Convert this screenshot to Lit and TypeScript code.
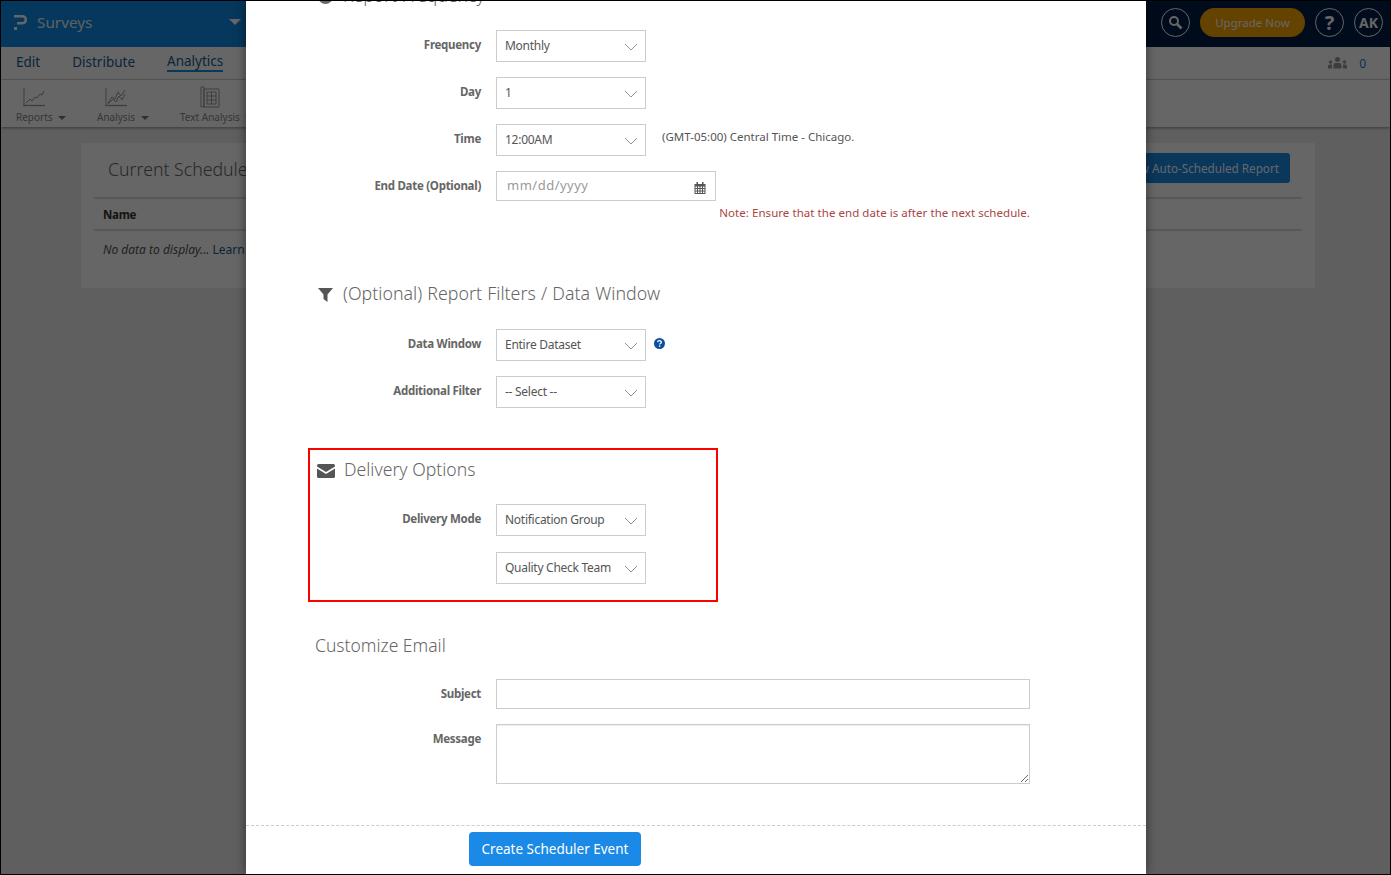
import { html, css, LitElement, svg } from 'lit';
import { customElement } from 'lit/decorators.js';

const chevron = html`<svg class="arrow" width="14" height="8" viewBox="0 0 14 8" fill="none">
  <path d="M1 1L7 7L13 1" stroke="#8b95a3" stroke-width="1"/>
</svg>`;

const chartLine = svg`<path d="M1 0V18" stroke="currentColor" stroke-width="1"/><path d="M0 17.500H22" stroke="currentColor" stroke-width="1.300"/><path d="M3 15L7 11L9 13L12 9L14 10L17 6L19 7L21 3" fill="none" stroke="currentColor" stroke-width="1"/>`;
const chartDouble = svg`<path d="M1 0V18" stroke="currentColor" stroke-width="1"/><path d="M0 17.500H22" stroke="currentColor" stroke-width="1.300"/><path d="M3 15L7 9L10 11L13 4L16 8L20 2" fill="none" stroke="currentColor" stroke-width="1"/><path d="M3 16L8 11L11 14L14 8L17 12L20 6" fill="none" stroke="currentColor" stroke-width="1"/>`;
const bookIcon = svg`<path d="M1 1H4V21H1ZM4 3H19V21H4Z" fill="none" stroke="currentColor" stroke-width="1"/><path d="M7 6H16V18H7ZM7 10H16M7 14H16M11.500 6V18" fill="none" stroke="currentColor" stroke-width="1"/>`;

@customElement('form-select')
class FormSelect extends LitElement {
  static properties = { value: { type: String } };
  value = '';

  static styles = css`
    :host {
      display: block;
      position: relative;
      width: 150px;
      height: 32px;
    }
    select {
      appearance: none;
      -webkit-appearance: none;
      width: 100%;
      height: 100%;
      padding: 0 24px 1px 8px;
      box-sizing: border-box;
      border: 1px solid #ccc;
      border-radius: 0;
      background: #fff;
      color: #555;
      font: 12px 'Noto Sans', sans-serif;
      letter-spacing: -0.27px;
      outline: none;
    }
    .arrow {
      position: absolute;
      top: 13px;
      right: 8px;
      pointer-events: none;
    }
  `;

  render() {
    return html`<select><option>${this.value}</option></select>${chevron}`;
  }
}

@customElement('app-root')
export class AppRoot extends LitElement {
  static styles = css`
    :host {
      display: block;
      font-family: 'Noto Sans', sans-serif;
      color: #666;
    }
    * {
      box-sizing: border-box;
    }
    .shell {
      position: relative;
      height: 875px;
      border: 1px solid #000;
      overflow: hidden;
      background: #eee;
    }

    /* page behind the dialog */
    .topbar {
      display: flex;
      align-items: center;
      height: 46px;
      padding-bottom: 3px;
      background: linear-gradient(90deg, #0f89e6 0%, #0f89e6 20%, #001c48 78%, #001c48 100%);
      color: #fff;
    }
    .logo {
      display: flex;
      align-items: center;
      gap: 10px;
      width: 240px;
      margin-bottom: 1px;
      padding-left: 13px;
      font-size: 15.300px;
      color: #eaf3fa;
    }
    .caret-big {
      width: 0;
      height: 0;
      margin-left: auto;
      border: 6px solid transparent;
      border-top-color: #fff;
      border-bottom: 0;
    }
    .top-actions {
      display: flex;
      align-items: center;
      gap: 10px;
      margin-left: auto;
      padding-right: 7px;
    }
    .round {
      display: flex;
      align-items: center;
      justify-content: center;
      width: 29px;
      height: 29px;
      border: 1px solid #fff;
      border-radius: 50%;
      font-weight: 700;
      font-size: 14px;
    }
    .round.big {
      font-size: 20px;
    }
    .upgrade {
      display: flex;
      align-items: center;
      justify-content: center;
      width: 105px;
      height: 29px;
      border-radius: 15px;
      background: #f9a800;
      color: #fff;
      font-size: 11.500px;
    }
    .nav {
      display: flex;
      align-items: center;
      gap: 32px;
      height: 33px;
      padding: 0 15px 2px;
      background: #fff;
      border-bottom: 1px solid #ddd;
      font-size: 13.500px;
      color: #1a5a94;
    }
    .nav .current {
      border-bottom: 2px solid #1a8fd8;
      line-height: 17px;
    }
    .members {
      display: flex;
      align-items: center;
      gap: 11px;
      margin: 2px 0 0 auto;
      padding-right: 9px;
      font-size: 12px;
      color: #1a7ad0;
    }
    .tools {
      display: flex;
      height: 47px;
      padding-left: 15px;
      background: #fff;
      box-shadow: 0 1px 3px rgba(0, 0, 0, 0.4);
    }
    .tool {
      width: 81px;
      font-size: 10px;
      line-height: 14px;
      color: #888;
    }
    .tool:nth-child(2) {
      width: 83px;
    }
    .tool-icon {
      display: flex;
      align-items: center;
      height: 24px;
      margin: 5px 0 1px;
      padding-left: 7px;
      color: #999;
    }
    .tool:nth-child(2) .tool-icon {
      padding-left: 8px;
    }
    .tool:nth-child(3) .tool-icon {
      padding-left: 20px;
    }
    .caret {
      display: inline-block;
      width: 0;
      height: 0;
      margin-left: 3px;
      vertical-align: middle;
      border: 4px solid transparent;
      border-top-color: #777;
      border-bottom: 0;
    }
    .card {
      margin: 16px 75px 0 80px;
      height: 145px;
      padding: 0 13px;
      background: #fff;
    }
    .card-head {
      display: flex;
      align-items: center;
      justify-content: space-between;
      height: 54px;
      padding: 0 12px 2px 14px;
      font-size: 17.700px;
      font-weight: 300;
      color: #666;
    }
    .new-report {
      height: 30px;
      margin: 0 0 2px;
      padding: 0 11px;
      border: 0;
      border-radius: 3px;
      background: #1a8ae6;
      color: #fff;
      font: 11.700px 'Noto Sans', sans-serif;
    }
    .table-head {
      padding: 8px 9px 7px;
      border-top: 2px solid #ddd;
      border-bottom: 2px solid #ddd;
      font-size: 11.500px;
      font-weight: 700;
      letter-spacing: -0.3px;
      color: #333;
    }
    .table-empty {
      padding: 10px 9px;
      font-size: 12px;
      font-style: italic;
      color: #555;
    }
    .table-empty span {
      font-style: normal;
      color: #1a5a94;
    }

    .overlay {
      position: absolute;
      inset: 0;
      background: rgba(0, 0, 0, 0.6);
    }

    /* dialog */
    .modal {
      position: absolute;
      top: 0;
      bottom: 0;
      left: 245px;
      width: 900px;
      overflow: hidden;
      background: #fff;
      box-shadow: 0 0 10px rgba(0, 0, 0, 0.5);
    }
    .body {
      margin-top: -18px;
    }
    .heading {
      display: flex;
      align-items: center;
      gap: 10px;
      height: 24px;
      margin: 0 0 23px 72px;
      font-size: 17.600px;
      font-weight: 300;
      color: #666;
    }
    .heading svg {
      margin-top: 3px;
    }
    .row {
      display: grid;
      grid-template-columns: 235px auto;
      column-gap: 15px;
      justify-content: start;
      margin-bottom: 15px;
    }
    .label {
      padding-top: 7px;
      text-align: right;
      font-size: 11.500px;
      font-weight: 700;
      letter-spacing: -0.280px;
      color: #666;
    }
    .with-side {
      display: flex;
      align-items: center;
    }
    .zone {
      margin: -7px 0 0 16px;
      font-size: 11.500px;
      color: #555;
    }
    .help {
      margin: -3px 0 0 8px;
    }
    .date {
      position: relative;
      width: 220px;
    }
    .date input,
    .subject,
    .message {
      display: block;
      border: 1px solid #ccc;
      outline: none;
      background: #fff;
    }
    .date input {
      width: 100%;
      height: 30px;
      padding: 0 10px 2px;
      font: 13px 'Noto Sans', sans-serif;
      letter-spacing: 0.5px;
    }
    .date input::placeholder {
      color: #999;
    }
    .date svg {
      position: absolute;
      top: 11px;
      right: 10px;
    }
    .note {
      width: 534px;
      margin: -11px 0 0 250px;
      height: 76px;
      text-align: right;
      font-size: 11.500px;
      letter-spacing: 0.050px;
      color: #a94442;
    }
    .filters {
      margin-bottom: 40px;
    }
    .filters .heading {
      margin-bottom: 24px;
      font-size: 17.800px;
      word-spacing: 0.6px;
    }
    .filters .row:last-child {
      margin-bottom: 0;
    }
    .delivery {
      width: 410px;
      margin-left: 62px;
      padding: 7px 0 16px;
      border: 2px solid #f00;
    }
    .delivery .heading {
      gap: 9px;
      margin: 0 0 23px 7px;
    }
    .delivery .row {
      grid-template-columns: 171px auto;
      margin-bottom: 16px;
    }
    .delivery .row:last-child {
      margin-bottom: 0;
    }
    .email-title {
      height: 24px;
      margin: 31px 0 22px 69px;
      font-size: 17.500px;
      font-weight: 300;
      color: #666;
    }
    .subject {
      width: 534px;
      height: 30px;
    }
    .message {
      width: 534px;
      height: 60px;
      resize: vertical;
      box-shadow: inset 0 1px 1px rgba(0, 0, 0, 0.075);
    }
    .row.last {
      margin-bottom: 41px;
    }
    .footer {
      padding: 6px 0 0 223px;
      border-top: 1px dashed #ccc;
    }
    .create {
      width: 172px;
      height: 34px;
      padding-bottom: 2px;
      border: 0;
      border-radius: 4px;
      background: #1a8ae6;
      color: #fff;
      font: 13.500px 'Noto Sans', sans-serif;
    }
  `;

  render() {
    return html`
      <div class="shell">
        <div class="topbar">
          <div class="logo">
            <svg width="13" height="15" viewBox="0 0 13 15" fill="none">
              <path d="M0 1.200H8Q11.800 1.200 11.800 4.700T8 8.200H3" stroke="#fff" stroke-width="2.400"/>
              <rect x="0" y="12" width="3" height="3" fill="#fff"/>
            </svg>
            Surveys
            <span class="caret-big"></span>
          </div>
          <div class="top-actions">
            <div class="round">
              <svg width="15" height="15" viewBox="0 0 15 15" fill="none">
                <circle cx="6" cy="6" r="4" stroke="#fff" stroke-width="2"/>
                <path d="M9 9L13.500 13.500" stroke="#fff" stroke-width="2.600"/>
              </svg>
            </div>
            <div class="upgrade">Upgrade Now</div>
            <div class="round big">?</div>
            <div class="round">AK</div>
          </div>
        </div>

        <div class="nav">
          <span>Edit</span>
          <span>Distribute</span>
          <span class="current">Analytics</span>
          <div class="members">
            <svg width="21" height="12" viewBox="0 0 21 12" fill="#999">
              <circle cx="10.500" cy="2.500" r="2.500"/>
              <path d="M6.500 11.500V8Q6.500 6 8.500 6H12.500Q14.500 6 14.500 8V11.500Z"/>
              <circle cx="3.500" cy="5" r="1.700"/>
              <path d="M1 11.500V9Q1 7.500 2.500 7.500H5V11.500Z"/>
              <circle cx="17.500" cy="5" r="1.700"/>
              <path d="M16 7.500H18.500Q20 7.500 20 9V11.500H16Z"/>
            </svg>
            0
          </div>
        </div>

        <div class="tools">
          <div class="tool">
            <div class="tool-icon"><svg width="22" height="19" viewBox="0 0 22 19">${chartLine}</svg></div>
            <span>Reports <i class="caret"></i></span>
          </div>
          <div class="tool">
            <div class="tool-icon"><svg width="22" height="19" viewBox="0 0 22 19">${chartDouble}</svg></div>
            <span>Analysis <i class="caret"></i></span>
          </div>
          <div class="tool">
            <div class="tool-icon"><svg width="20" height="22" viewBox="0 0 20 22">${bookIcon}</svg></div>
            <span>Text Analysis <i class="caret"></i></span>
          </div>
        </div>

        <div class="card">
          <div class="card-head">
            <span>Current Schedules</span>
            <button class="new-report">+ Create New Auto-Scheduled Report</button>
          </div>
          <div class="table-head">Name</div>
          <div class="table-empty">No data to display... <span>Learn more</span></div>
        </div>

        <div class="overlay"></div>

        <div class="modal">
          <div class="body">
            <div class="heading">
              <svg width="15" height="15" viewBox="0 0 15 15"><circle cx="7.500" cy="7.500" r="7.500" fill="#666"/></svg>
              Report Frequency
            </div>

            <div class="row">
              <div class="label">Frequency</div>
              <form-select value="Monthly"></form-select>
            </div>
            <div class="row">
              <div class="label">Day</div>
              <form-select value="1"></form-select>
            </div>
            <div class="row">
              <div class="label">Time</div>
              <div class="with-side">
                <form-select value="12:00AM"></form-select>
                <span class="zone">(GMT-05:00) Central Time - Chicago.</span>
              </div>
            </div>
            <div class="row">
              <div class="label">End Date (Optional)</div>
              <div class="date">
                <input placeholder="mm/dd/yyyy" />
                <svg width="12" height="12" viewBox="0 0 12 12" fill="#555">
                  <path d="M2.500 0H4V2H8V0H9.500V2H11.500V12H.5V2H2.500ZM1.500 4.500V6H3V4.500ZM4 4.500V6H5.500V4.500ZM6.500 4.500V6H8V4.500ZM9 4.500V6H10.500V4.500ZM1.500 7V8.500H3V7ZM4 7V8.500H5.500V7ZM6.500 7V8.500H8V7ZM9 7V8.500H10.500V7ZM1.500 9.500V11H3V9.500ZM4 9.500V11H5.500V9.500ZM6.500 9.500V11H8V9.500ZM9 9.500V11H10.500V9.500Z" fill-rule="evenodd"/>
                </svg>
              </div>
            </div>
            <div class="note">Note: Ensure that the end date is after the next schedule.</div>

            <div class="filters">
              <div class="heading">
                <svg width="15" height="14" viewBox="0 0 15 14"><path d="M0 0H15L9.500 6.500V14L5.500 11V6.500Z" fill="#555"/></svg>
                (Optional) Report Filters / Data Window
              </div>
              <div class="row">
                <div class="label">Data Window</div>
                <div class="with-side">
                  <form-select value="Entire Dataset"></form-select>
                  <svg class="help" width="11" height="11" viewBox="0 0 11 11">
                    <circle cx="5.500" cy="5.500" r="5.500" fill="#0b4ea2"/>
                    <path d="M3.600 4.200Q3.800 2.600 5.500 2.600T7.400 4.100Q7.400 5 6.400 5.500Q5.700 5.900 5.700 6.500" fill="none" stroke="#fff" stroke-width="1.300"/>
                    <rect x="4.900" y="7.400" width="1.400" height="1.400" fill="#fff"/>
                  </svg>
                </div>
              </div>
              <div class="row">
                <div class="label">Additional Filter</div>
                <form-select value="-- Select --"></form-select>
              </div>
            </div>

            <div class="delivery">
              <div class="heading">
                <svg width="18" height="14" viewBox="0 0 18 14" fill="#555">
                  <path d="M1.500 0H16.500Q18 0 18 1.500V2.500L9 8L0 2.500V1.500Q0 0 1.500 0Z"/>
                  <path d="M0 4.500L9 10L18 4.500V12.500Q18 14 16.500 14H1.500Q0 14 0 12.500Z"/>
                </svg>
                Delivery Options
              </div>
              <div class="row">
                <div class="label">Delivery Mode</div>
                <form-select value="Notification Group"></form-select>
              </div>
              <div class="row">
                <div></div>
                <form-select value="Quality Check Team"></form-select>
              </div>
            </div>

            <div class="email-title">Customize Email</div>
            <div class="row">
              <div class="label">Subject</div>
              <input class="subject" />
            </div>
            <div class="row last">
              <div class="label">Message</div>
              <textarea class="message"></textarea>
            </div>
            <div class="footer">
              <button class="create">Create Scheduler Event</button>
            </div>
          </div>
        </div>
      </div>
    `;
  }
}
